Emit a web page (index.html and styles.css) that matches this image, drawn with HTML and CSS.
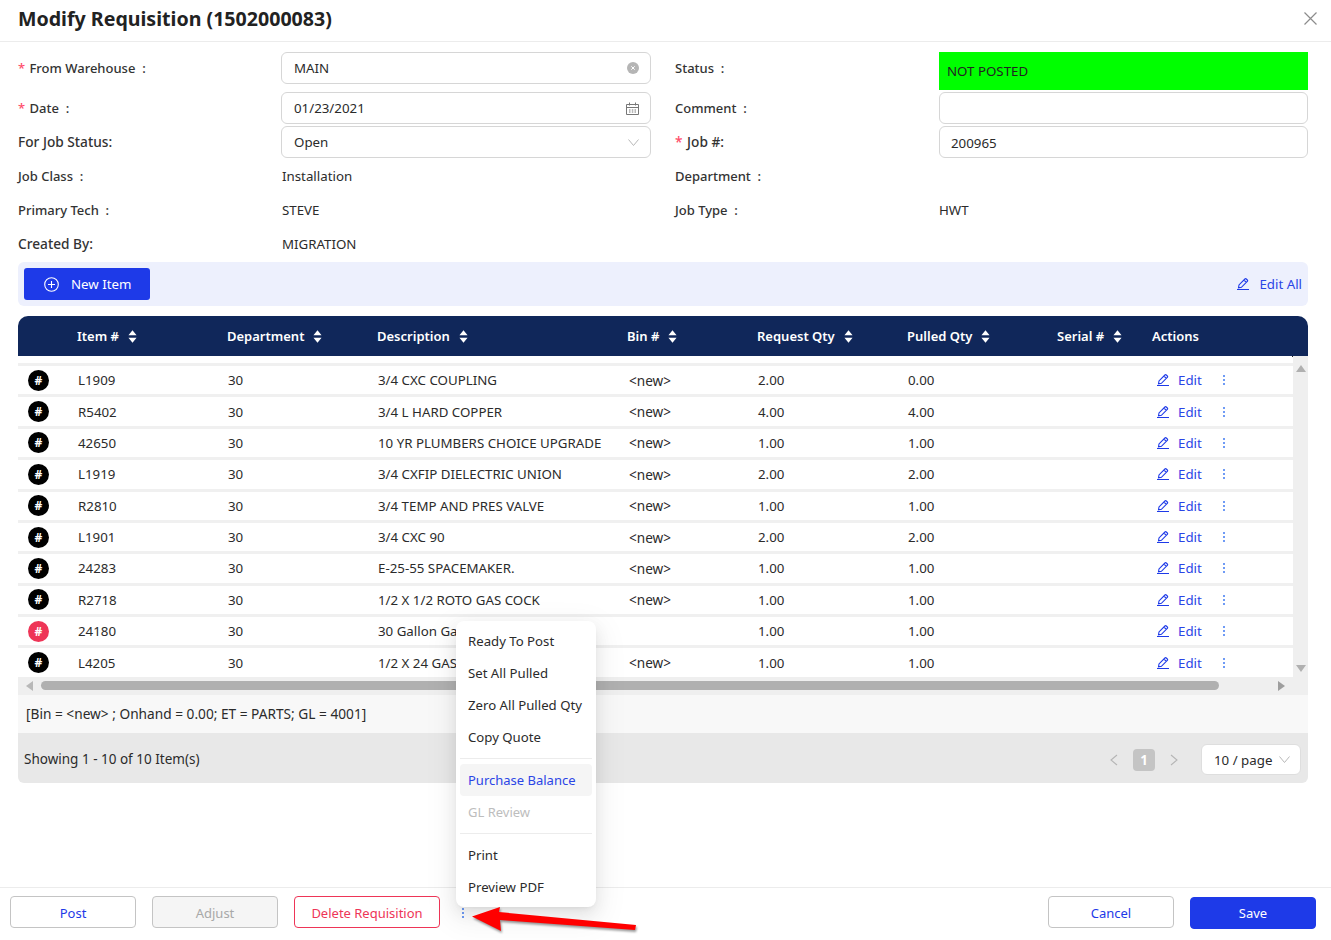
FILE: index.html
```html
<!DOCTYPE html>
<html lang="en">
<head>
<meta charset="utf-8">
<title>Modify Requisition</title>
<link rel="stylesheet" href="styles.css">
</head>
<body>
<svg class="defs" width="0" height="0" aria-hidden="true">
  <symbol id="pen" viewBox="0 0 12 12"><path d="M0 11.500h12M1.500 9.800l.5-2.900L7.900 1a1 1 0 0 1 1.400 0l1 1a1 1 0 0 1 0 1.400L4.400 9.300z M6.900 2l2.400 2.400" fill="none" stroke="currentColor" stroke-width="1.100"/></symbol>
  <symbol id="sort" viewBox="0 0 10 16"><path d="M5 1l4.500 5.500H.5zM5 15L.5 9.500h9z" fill="currentColor"/></symbol>
</svg>
<div class="page">
  <header class="head">
    <h1 class="title">Modify Requisition (1502000083)</h1>
    <svg class="close" width="13" height="13" viewBox="0 0 13 13"><path d="M.5 .5l12 12M12.500 .5l-12 12" stroke="#8c8c8c" stroke-width="1.200" fill="none"/></svg>
  </header>
  <main class="content">
    <section class="form">
      <div class="lab"><span class="req">*</span> From Warehouse&nbsp; :</div>
      <div class="ctl">MAIN
        <svg class="ctl-icon" width="12" height="12" viewBox="0 0 12 12"><circle cx="6" cy="6" r="6" fill="#b5b5b5"/><path d="M4.300 4.300l3.400 3.400M7.700 4.300L4.300 7.700" stroke="#fff" stroke-width="1"/></svg>
      </div>
      <div class="lab lab-r">Status&nbsp; :</div>
      <div class="status">NOT POSTED</div>

      <div class="lab"><span class="req">*</span> Date&nbsp; :</div>
      <div class="ctl">01/23/2021
        <svg class="ctl-icon" width="13" height="13" viewBox="0 0 13 13"><path d="M.5 2.500h12v10H.5zM.5 5.500h12M3.500 .5v3M9.500 .5v3M3 8h1.500M5.800 8h1.500M8.500 8h1.500M3 10h1.500M5.800 10h1.500M8.500 10h1.500" fill="none" stroke="#777" stroke-width="1"/></svg>
      </div>
      <div class="lab lab-r">Comment&nbsp; :</div>
      <div class="ctl ctl-r"></div>

      <div class="lab lab-w">For Job Status:</div>
      <div class="ctl">Open
        <svg class="ctl-icon" width="11" height="7" viewBox="0 0 11 7"><path d="M.5 .5l5 6 5-6" fill="none" stroke="#b8b8b8" stroke-width="1"/></svg>
      </div>
      <div class="lab lab-r lab-w"><span class="req">*</span> Job #:</div>
      <div class="ctl ctl-r ctl-job">200965</div>

      <div class="lab">Job Class&nbsp; :</div>
      <div class="val">Installation</div>
      <div class="lab lab-r">Department&nbsp; :</div>
      <div class="val"></div>

      <div class="lab">Primary Tech&nbsp; :</div>
      <div class="val">STEVE</div>
      <div class="lab lab-r">Job Type&nbsp; :</div>
      <div class="val">HWT</div>

      <div class="lab lab-w">Created By:</div>
      <div class="val">MIGRATION</div>
      <div></div>
      <div></div>
    </section>

    <section class="toolbar">
      <button class="new-btn" type="button">
        <svg width="15" height="15" viewBox="0 0 15 15"><circle cx="7.500" cy="7.500" r="6.800" fill="none" stroke="#fff" stroke-width="1.100"/><path d="M7.500 4v7M4 7.500h7" stroke="#fff" stroke-width="1.100"/></svg>
        New Item
      </button>
      <a class="edit-all"><svg class="pen" width="12" height="12"><use href="#pen"/></svg>Edit All</a>
    </section>

    <section class="table">
      <div class="t-head t-grid">
        <div></div>
        <div class="th">Item # <svg width="9" height="15"><use href="#sort"/></svg></div>
        <div class="th">Department <svg width="9" height="15"><use href="#sort"/></svg></div>
        <div class="th">Description <svg width="9" height="15"><use href="#sort"/></svg></div>
        <div class="th">Bin # <svg width="9" height="15"><use href="#sort"/></svg></div>
        <div class="th">Request Qty <svg width="9" height="15"><use href="#sort"/></svg></div>
        <div class="th">Pulled Qty <svg width="9" height="15"><use href="#sort"/></svg></div>
        <div class="th">Serial # <svg width="9" height="15"><use href="#sort"/></svg></div>
        <div class="th">Actions</div>
      </div>
      <div class="t-body">
        <div class="rows">
          <div class="row t-grid"><span class="hash">#</span><div>L1909</div><div>30</div><div>3/4 CXC COUPLING</div><div class="bin">&lt;new&gt;</div><div>2.00</div><div>0.00</div><div></div><div class="acts"><svg class="pen" width="12" height="12"><use href="#pen"/></svg><a>Edit</a><span class="dots"><i></i><i></i><i></i></span></div></div>
          <div class="row t-grid"><span class="hash">#</span><div>R5402</div><div>30</div><div>3/4 L HARD COPPER</div><div class="bin">&lt;new&gt;</div><div>4.00</div><div>4.00</div><div></div><div class="acts"><svg class="pen" width="12" height="12"><use href="#pen"/></svg><a>Edit</a><span class="dots"><i></i><i></i><i></i></span></div></div>
          <div class="row t-grid"><span class="hash">#</span><div>42650</div><div>30</div><div>10 YR PLUMBERS CHOICE UPGRADE</div><div class="bin">&lt;new&gt;</div><div>1.00</div><div>1.00</div><div></div><div class="acts"><svg class="pen" width="12" height="12"><use href="#pen"/></svg><a>Edit</a><span class="dots"><i></i><i></i><i></i></span></div></div>
          <div class="row t-grid"><span class="hash">#</span><div>L1919</div><div>30</div><div>3/4 CXFIP DIELECTRIC UNION</div><div class="bin">&lt;new&gt;</div><div>2.00</div><div>2.00</div><div></div><div class="acts"><svg class="pen" width="12" height="12"><use href="#pen"/></svg><a>Edit</a><span class="dots"><i></i><i></i><i></i></span></div></div>
          <div class="row t-grid"><span class="hash">#</span><div>R2810</div><div>30</div><div>3/4 TEMP AND PRES VALVE</div><div class="bin">&lt;new&gt;</div><div>1.00</div><div>1.00</div><div></div><div class="acts"><svg class="pen" width="12" height="12"><use href="#pen"/></svg><a>Edit</a><span class="dots"><i></i><i></i><i></i></span></div></div>
          <div class="row t-grid"><span class="hash">#</span><div>L1901</div><div>30</div><div>3/4 CXC 90</div><div class="bin">&lt;new&gt;</div><div>2.00</div><div>2.00</div><div></div><div class="acts"><svg class="pen" width="12" height="12"><use href="#pen"/></svg><a>Edit</a><span class="dots"><i></i><i></i><i></i></span></div></div>
          <div class="row t-grid"><span class="hash">#</span><div>24283</div><div>30</div><div>E-25-55 SPACEMAKER.</div><div class="bin">&lt;new&gt;</div><div>1.00</div><div>1.00</div><div></div><div class="acts"><svg class="pen" width="12" height="12"><use href="#pen"/></svg><a>Edit</a><span class="dots"><i></i><i></i><i></i></span></div></div>
          <div class="row t-grid"><span class="hash">#</span><div>R2718</div><div>30</div><div>1/2 X 1/2 ROTO GAS COCK</div><div class="bin">&lt;new&gt;</div><div>1.00</div><div>1.00</div><div></div><div class="acts"><svg class="pen" width="12" height="12"><use href="#pen"/></svg><a>Edit</a><span class="dots"><i></i><i></i><i></i></span></div></div>
          <div class="row t-grid"><span class="hash hash-red">#</span><div>24180</div><div>30</div><div>30 Gallon Ga</div><div></div><div>1.00</div><div>1.00</div><div></div><div class="acts"><svg class="pen" width="12" height="12"><use href="#pen"/></svg><a>Edit</a><span class="dots"><i></i><i></i><i></i></span></div></div>
          <div class="row t-grid"><span class="hash">#</span><div>L4205</div><div>30</div><div>1/2 X 24 GAS</div><div class="bin">&lt;new&gt;</div><div>1.00</div><div>1.00</div><div></div><div class="acts"><svg class="pen" width="12" height="12"><use href="#pen"/></svg><a>Edit</a><span class="dots"><i></i><i></i><i></i></span></div></div>
        </div>
        <div class="vbar"><span class="tri tri-up"></span><span class="tri tri-down"></span></div>
      </div>
      <div class="hbar"><span class="tri tri-left"></span><span class="thumb"></span><span class="tri tri-right"></span></div>
      <div class="info">[Bin = &lt;new&gt; ; Onhand = 0.00; ET = PARTS; GL = 4001]</div>
      <div class="pager">
        <span class="showing">Showing 1 - 10 of 10 Item(s)</span>
        <svg class="pg-arrow" width="8" height="12" viewBox="0 0 8 12"><path d="M7 1L1 6l6 5" fill="none" stroke="#b5b5b5" stroke-width="1.100"/></svg>
        <span class="pg-num">1</span>
        <svg class="pg-arrow" width="8" height="12" viewBox="0 0 8 12"><path d="M1 1l6 5-6 5" fill="none" stroke="#b5b5b5" stroke-width="1.100"/></svg>
        <span class="pg-size">10 / page
          <svg width="11" height="7" viewBox="0 0 11 7"><path d="M.5 .5l5 6 5-6" fill="none" stroke="#b8b8b8" stroke-width="1"/></svg>
        </span>
      </div>
    </section>
  </main>
  <footer class="foot">
    <button class="btn btn-blue" type="button">Post</button>
    <button class="btn btn-off" type="button">Adjust</button>
    <button class="btn btn-del" type="button">Delete Requisition</button>
    <span class="dots foot-dots"><i></i><i></i><i></i></span>
    <button class="btn btn-blue btn-cancel" type="button">Cancel</button>
    <button class="btn btn-save" type="button">Save</button>
  </footer>

  <nav class="menu">
    <div class="mi">Ready To Post</div>
    <div class="mi">Set All Pulled</div>
    <div class="mi">Zero All Pulled Qty</div>
    <div class="mi">Copy Quote</div>
    <div class="sep"></div>
    <div class="mi mi-hot">Purchase Balance</div>
    <div class="mi mi-off">GL Review</div>
    <div class="sep"></div>
    <div class="mi">Print</div>
    <div class="mi">Preview PDF</div>
  </nav>
  <svg class="arrow" width="172" height="32" viewBox="0 0 172 32"><path d="M2 9.500L30 0l-1 5 137 13-1 5L30 13l1 11z" fill="#f00"/></svg>
</div>
</body>
</html>
```
FILE: styles.css
```css
* { box-sizing: border-box; }
html, body { margin: 0; padding: 0; }
body {
  font-family: "Noto Sans", "Open Sans", sans-serif;
  font-size: 13.3px;
  color: #2b2b2b;
  background: #fff;
}
.defs { position: absolute; }
.page {
  position: relative;
  width: 1331px;
  height: 940px;
  display: flex;
  flex-direction: column;
  overflow: hidden;
}
.head {
  height: 42px;
  flex: none;
  display: flex;
  align-items: center;
  justify-content: space-between;
  padding: 0 14px 4px 18px;
  border-bottom: 1px solid #ececec;
}
.title { margin: 0; font-size: 19.6px; font-weight: 700; color: #222; line-height: 38px; }
.content { flex: 1; padding: 10px 23px 0 18px; }

.form {
  display: grid;
  grid-template-columns: 263px 370px 288px 369px;
  grid-template-rows: 38px repeat(5, 32px);
  row-gap: 2px;
}
.lab { height: 32px; line-height: 32px; font-size: 13px; font-weight: 500; color: #333; }
.lab-w { font-size: 13.7px; }
.lab-r { padding-left: 24px; }
.req { color: #ff4d6a; margin-right: 1px; }
.ctl {
  height: 32px;
  border: 1px solid #d6d6d6;
  border-radius: 6px;
  padding: 0 11px 0 12px;
  line-height: 30px;
  display: flex;
  justify-content: space-between;
  align-items: center;
}
.ctl-r { padding-left: 11px; }
.ctl-job { padding-top: 1px; }
.status {
  background: #0f0;
  color: #222;
  padding-left: 8px;
  line-height: 38px;
}
.val { height: 32px; line-height: 32px; padding-left: 1px; }
.val:nth-child(4n) { padding-left: 0; }

.toolbar {
  margin-top: 2px;
  height: 44px;
  background: #edf0fd;
  border-radius: 6px;
  display: flex;
  align-items: center;
  justify-content: space-between;
  padding: 0 6px;
}
.new-btn {
  width: 126px;
  height: 32px;
  background: #1e3ae8;
  border: 0;
  border-radius: 3px;
  color: #fff;
  font: inherit;
  display: flex;
  align-items: center;
  gap: 12px;
  padding: 0 0 0 20px;
}
.edit-all { color: #2b45e6; display: flex; align-items: center; gap: 10px; }
.pen { color: #1e3ae8; flex: none; }

.table { margin-top: 10px; }
.t-grid {
  display: grid;
  grid-template-columns: 60px 150px 150px 250px 130px 150px 150px 95px 1fr;
  align-items: center;
}
.t-head {
  height: 40px;
  background: #10275a;
  border-radius: 10px 10px 0 0;
  color: #fff;
}
.th { font-size: 13px; font-weight: 600; margin-left: -1px; display: flex; align-items: center; gap: 5px; }
.th svg { color: #fff; margin-left: 4px; }
.t-body { display: flex; }
.rows {
  width: 1275px;
  padding: 7.1px 0 .3px;
  flex: none;
  background: linear-gradient(#222, #222) no-repeat right top / 1px 1px;
}
.row {
  height: 31.36px;
  border-top: 3px solid #f0f0f0;
  background: #fff;
}
.bin { padding-left: 1px; font-size: 13.6px; }
.hash {
  width: 21px;
  height: 21px;
  margin-left: 10px;
  border-radius: 50%;
  background: #000;
  color: #fff;
  font-weight: 700;
  font-size: 12px;
  line-height: 21px;
  text-align: center;
}
.hash-red { background: #ee3557; }
.acts { display: flex; align-items: center; padding-left: 4px; }
.acts a { color: #2b45e6; margin-left: 9px; }
.dots { display: inline-flex; flex-direction: column; gap: 2px; width: 2px; }
.dots i { width: 2px; height: 2px; background: #6f9bf5; display: block; }
.acts .dots { margin-left: 21px; }
.vbar {
  width: 15px;
  background: #efefef;
  display: flex;
  flex-direction: column;
  align-items: center;
  justify-content: space-between;
  padding: 9px 0 5px;
}
.tri { display: block; width: 0; height: 0; border-style: solid; border-color: transparent; flex: none; }
.tri-up { border-width: 0 5px 7px; border-bottom-color: #b0b0b0; }
.tri-down { border-width: 7px 5px 0; border-top-color: #b0b0b0; }
.tri-left { border-width: 5px 7px 5px 0; border-right-color: #b8b8b8; margin-left: 8px; }
.tri-right { border-width: 5px 0 5px 7px; border-left-color: #9e9e9e; margin-left: 59px; }
.hbar { height: 18px; background: #efefef; display: flex; align-items: center; }
.thumb { width: 1178px; height: 9px; background: #b0b0b0; border-radius: 5px; margin-left: 8px; }
.info { height: 38px; line-height: 38px; font-size: 13.7px; background: #f8f8f8; padding-left: 8px; }
.pager {
  height: 50px;
  background: #e8e8e8;
  border-radius: 0 0 6px 6px;
  display: flex;
  align-items: center;
  padding: 4px 7px 0 6px;
}
.showing { margin-right: auto; margin-bottom: 2px; font-size: 13.5px; }
.pg-arrow { flex: none; }
.pg-num {
  width: 22px;
  height: 22px;
  margin: 0 15px;
  background: #c4c4c4;
  border-radius: 4px;
  color: #fff;
  font-weight: 700;
  text-align: center;
  line-height: 22px;
}
.pg-size {
  width: 100px;
  height: 31px;
  margin-left: 23px;
  background: #fff;
  border: 1px solid #dedede;
  border-radius: 6px;
  display: flex;
  align-items: center;
  justify-content: space-between;
  padding: 0 10px 0 12px;
}

.foot {
  height: 53px;
  flex: none;
  border-top: 1px solid #ececec;
  padding: 8px 15px 0 10px;
  display: flex;
  align-items: flex-start;
  gap: 16px;
}
.btn {
  width: 126px;
  height: 32px;
  padding: 2px 0 0;
  border-radius: 4px;
  border: 1px solid #c4c4c4;
  background: #fff;
  font: inherit;
  font-size: 13px;
}
.btn-blue { color: #1e3ae8; }
.btn-off { background: #f5f5f5; color: #a8a8a8; }
.btn-del { width: 146px; border-color: #ee3557; color: #ee3557; }
.btn-save { background: #1e3ae8; border-color: #1e3ae8; color: #fff; margin-top: 1px; padding: 0; }
.btn-cancel { margin-left: auto; }
.foot-dots { margin: 12px 0 0 6px; }

.menu {
  position: absolute;
  left: 456px;
  top: 621px;
  width: 140px;
  padding: 4px;
  background: #fff;
  border-radius: 8px;
  box-shadow: 0 3px 6px -4px rgba(0,0,0,.12), 0 6px 16px rgba(0,0,0,.08), 0 9px 28px 8px rgba(0,0,0,.05);
}
.mi { height: 32px; line-height: 32px; font-size: 13.2px; padding-left: 8px; border-radius: 4px; white-space: nowrap; }
.mi-hot { background: #f5f5f5; color: #2b45e6; font-size: 13px; }
.mi-off { color: #bdbdbd; font-size: 13px; }
.sep { height: 1px; margin: 5px 0; background: #ececec; }
.arrow {
  position: absolute;
  left: 470px;
  top: 907px;
  filter: drop-shadow(1px 2px 1px rgba(0,0,0,.4));
}
```
